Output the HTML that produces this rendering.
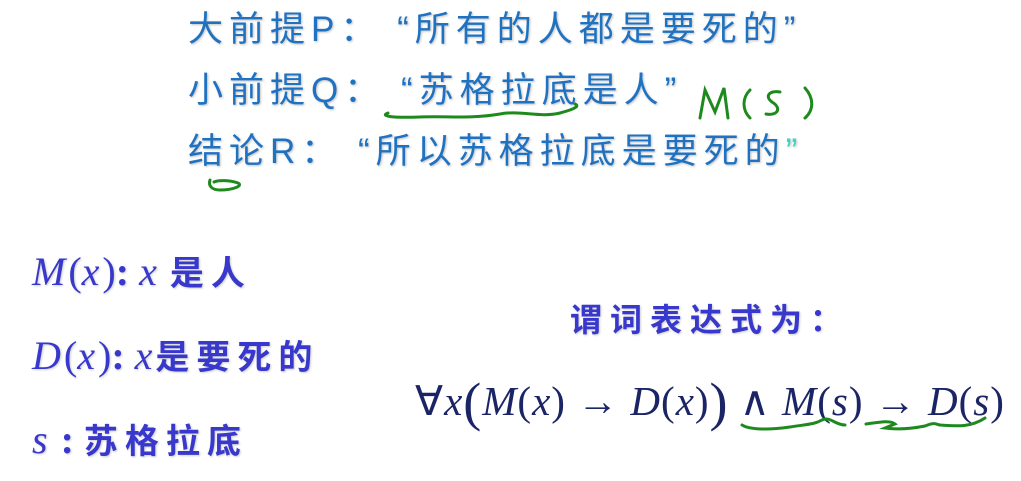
<!DOCTYPE html>
<html><head><meta charset="utf-8"><style>
body{margin:0;width:1021px;height:481px;background:#fff;position:relative;overflow:hidden}
.t{position:absolute;white-space:nowrap;line-height:1}
.b{color:#1f72c2;font-family:"Liberation Sans","Noto Sans CJK SC",sans-serif;font-size:35px;letter-spacing:6px;text-shadow:1px 1px 2px rgba(0,0,0,.25)}
.p{color:#3838cc;font-family:"Liberation Serif","Noto Sans CJK SC",serif;font-size:40px;text-shadow:1px 1px 2px rgba(0,0,0,.2)}
.p i{font-style:italic;letter-spacing:3px}
.p .c{font-family:"Noto Sans CJK SC",sans-serif;font-weight:bold;font-size:34px;letter-spacing:7px}
.f{color:#1b2566;font-family:"Liberation Serif",serif;font-size:41px;letter-spacing:1px}
.f i{font-style:italic}
</style></head><body>
<div class="t b" style="left:188px;top:12px">大前提P： “所有的人都是要死的”</div>
<div class="t b" style="left:188px;top:73px">小前提Q： “苏格拉底是人”</div>
<div class="t b" style="left:188px;top:134px">结论R： “所以苏格拉底是要死的<span style="color:#3cd6c0">”</span></div>
<div class="t p" style="left:32px;top:252px"><i>M</i>(<i>x</i>)<b>:</b> <i>x</i> <span class="c">是人</span></div>
<div class="t p" style="left:32px;top:336px"><i>D</i>(<i>x</i>)<b>:</b> <i>x</i><span class="c">是要死的</span></div>
<div class="t p" style="left:32px;top:420px"><i>s</i> <b>:</b> <span class="c">苏格拉底</span></div>
<div class="t p" style="left:570px;top:298px"><span class="c" style="font-size:32px;letter-spacing:8px">谓词表达式为：</span></div>
<div class="t f" style="left:415px;top:375px">∀<i>x</i><span style="font-size:54px;vertical-align:-5px">(</span><i>M</i>(<i>x</i>) → <i>D</i>(<i>x</i>)<span style="font-size:54px;vertical-align:-5px">)</span> ∧ <i>M</i>(<i>s</i>) → <i>D</i>(<i>s</i>)</div>
<svg width="1021" height="481" style="position:absolute;left:0;top:0" fill="none" stroke="#1e8a1e" stroke-width="3" stroke-linecap="round">
<path d="M388 113 C380 116 390 118 420 117 C450 116 470 119 500 114 C520 110 540 118 560 113 C575 109 580 106 575 104"/>
<path d="M700 118 L705 90 L715 112 L724 88 L728 118"/>
<path d="M750 90 C742 98 742 110 750 118"/>
<path d="M780 92 C770 90 764 96 772 102 C782 108 778 116 766 114"/>
<path d="M805 88 C814 98 814 110 805 118"/>
<path d="M210 180 C208 186 212 190 220 190 C232 190 244 186 238 183 C230 180 218 180 214 182"/>
<path d="M742 425 C750 430 770 430 790 427 C810 424 815 424 822 420 C830 416 835 425 845 425"/>
<path d="M866 424 C880 422 890 420 895 424 L885 428 C900 430 915 428 925 426 C935 422 935 424 940 425 C955 426 970 428 985 418"/>
</svg>
</body></html>
